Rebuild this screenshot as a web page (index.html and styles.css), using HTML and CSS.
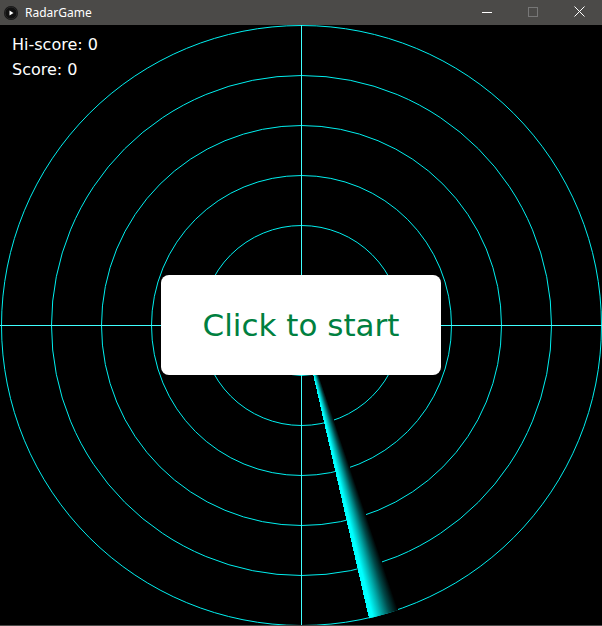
FILE: index.html
```html
<!DOCTYPE html>
<html>
<head>
<meta charset="utf-8">
<link rel="stylesheet" href="styles.css">
</head>
<body>
<div class="window">
  <div class="titlebar">
    <svg class="app-icon" width="14" height="14" viewBox="0 0 14 14">
      <circle cx="7" cy="7" r="7" fill="#111"/>
      <circle cx="7" cy="7" r="6" fill="none" stroke="#2a2a2a" stroke-width="1"/>
      <path d="M5.5 4.5 L9.5 7 L5.5 9.5 Z" fill="#fff"/>
    </svg>
    <span class="title">RadarGame</span>
    <div class="controls">
      <div class="ctl">
        <svg width="10" height="10" viewBox="0 0 10 10"><path d="M0 5.5 H10" stroke="#fff" stroke-width="1"/></svg>
      </div>
      <div class="ctl">
        <svg width="10" height="10" viewBox="0 0 10 10"><rect x="0.5" y="0.5" width="9" height="9" fill="none" stroke="#777" stroke-width="1"/></svg>
      </div>
      <div class="ctl">
        <svg width="11" height="11" viewBox="0 0 11 11"><path d="M0.5 0.5 L10.5 10.5 M10.5 0.5 L0.5 10.5" stroke="#fff" stroke-width="1"/></svg>
      </div>
    </div>
  </div>
  <div class="canvas">
    <svg class="radar" width="602" height="600" viewBox="0 0 602 600">
      <g fill="none" stroke="#00f0f0" stroke-width="1">
        <circle cx="301.5" cy="300.5" r="50"/>
        <circle cx="301.5" cy="300.5" r="100"/>
        <circle cx="301.5" cy="300.5" r="150"/>
        <circle cx="301.5" cy="300.5" r="200"/>
        <circle cx="301.5" cy="300.5" r="250"/>
        <circle cx="301.5" cy="300.5" r="300"/>
      </g>
      <g stroke="#40ffff" stroke-width="1">
        <path d="M0 300.5 H602"/>
        <path d="M301.5 0 V600"/>
      </g>
    </svg>
    <div class="sweep"></div>
    <div class="scores">
      <div class="score-line">Hi-score: 0</div>
      <div class="score-line">Score: 0</div>
    </div>
    <div class="start-btn">Click to start</div>
  </div>
</div>
</body>
</html>
```
FILE: styles.css
```css
html, body {
  margin: 0;
  padding: 0;
  background: #4b4a48;
}
.window {
  width: 602px;
  height: 626px;
  background: #4b4a48;
  overflow: hidden;
}
.titlebar {
  height: 25px;
  display: flex;
  align-items: center;
  background: #4b4a48;
}
.app-icon {
  margin-left: 4px;
  flex: none;
}
.title {
  margin-left: 7px;
  color: #ffffff;
  font-family: "Noto Sans", "DejaVu Sans", sans-serif;
  font-size: 12px;
  line-height: 25px;
  padding-bottom: 1px;
}
.controls {
  margin-left: auto;
  display: flex;
  height: 25px;
}
.ctl {
  width: 46px;
  height: 25px;
  display: flex;
  align-items: center;
  justify-content: center;
}
.ctl svg {
  margin-top: -2px;
}
.canvas {
  position: relative;
  width: 602px;
  height: 600px;
  background: #000;
  overflow: hidden;
}
.radar {
  position: absolute;
  left: 0;
  top: 0;
}
.sweep {
  position: absolute;
  left: 1.5px;
  top: 0.5px;
  width: 600px;
  height: 600px;
  border-radius: 50%;
  background: conic-gradient(from 0deg at 50% 50%,
    transparent 0deg 161.3deg,
    #000 161.3deg,
    #004a4a 163deg,
    #00b0b0 164.8deg,
    #00ffff 166.3deg,
    #00ffff 167.1deg,
    transparent 167.1deg 360deg);
}
.scores {
  position: relative;
  padding: 7px 0 0 12px;
  color: #ffffff;
  font-family: "DejaVu Sans", sans-serif;
  font-size: 16px;
  line-height: 25px;
}
.start-btn {
  position: absolute;
  left: 161px;
  top: 250px;
  width: 280px;
  height: 100px;
  border-radius: 8px;
  background: #ffffff;
  display: flex;
  align-items: center;
  justify-content: center;
  color: #008040;
  font-family: "DejaVu Sans", sans-serif;
  font-size: 31px;
}
```
